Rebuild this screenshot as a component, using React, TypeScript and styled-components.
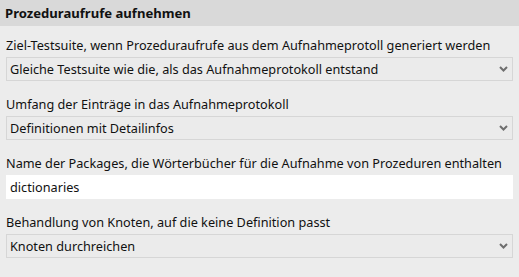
import React from "react";
import styled, { createGlobalStyle } from "styled-components";

const Global = createGlobalStyle`
  html, body { margin: 0; padding: 0; background: #ececec; }
  body { font-family: "Noto Sans", "Open Sans", sans-serif; font-size: 12.7px; color: #000; }
`;

const Page = styled.div`
  width: 519px;
  height: 277px;
  background: #ececec;
  display: flex;
  flex-direction: column;
`;

const Header = styled.div`
  height: 26px;
  background: #d9d9d9;
  display: flex;
  align-items: center;
  padding-left: 5px;
  font-weight: bold;
  font-size: 13.1px;
  color: #111;
`;

const Body = styled.div`
  display: flex;
  flex-direction: column;
  padding: 8px 6px 0 6px;
`;

const Field = styled.div`
  display: flex;
  flex-direction: column;
  height: 59px;
`;

const Label = styled.div`
  height: 23px;
  line-height: 23px;
  white-space: nowrap;
  color: #111;
`;

const Combo = styled.div`
  height: 24px;
  box-sizing: border-box;
  border: 1px solid #d6d6d6;
  background: #ebebeb;
  display: flex;
  align-items: center;
  justify-content: space-between;
  padding: 0 4px 0 3px;
  color: #111;
  white-space: nowrap;
`;

const Input = styled.div`
  height: 24px;
  box-sizing: border-box;
  background: #fff;
  display: flex;
  align-items: center;
  padding: 0 4px;
  color: #111;
`;

const Chevron = () => (
  <svg width="9" height="6" viewBox="0 0 9 6">
    <path d="M1 1 L4.5 4.5 L8 1" fill="none" stroke="#6e6e6e" strokeWidth="2" />
  </svg>
);

const fields: { label: string; value: string; kind: "combo" | "input" }[] = [
  { label: "Ziel-Testsuite, wenn Prozeduraufrufe aus dem Aufnahmeprotoll generiert werden", value: "Gleiche Testsuite wie die, als das Aufnahmeprotokoll entstand", kind: "combo" },
  { label: "Umfang der Einträge in das Aufnahmeprotokoll", value: "Definitionen mit Detailinfos", kind: "combo" },
  { label: "Name der Packages, die Wörterbücher für die Aufnahme von Prozeduren enthalten", value: "dictionaries", kind: "input" },
  { label: "Behandlung von Knoten, auf die keine Definition passt", value: "Knoten durchreichen", kind: "combo" },
];

export default function App() {
  return (
    <Page>
      <Global />
      <Header>Prozeduraufrufe aufnehmen</Header>
      <Body>
        {fields.map((f) => (
          <Field key={f.label}>
            <Label>{f.label}</Label>
            {f.kind === "combo" ? (
              <Combo>
                <span>{f.value}</span>
                <Chevron />
              </Combo>
            ) : (
              <Input>{f.value}</Input>
            )}
          </Field>
        ))}
      </Body>
    </Page>
  );
}
